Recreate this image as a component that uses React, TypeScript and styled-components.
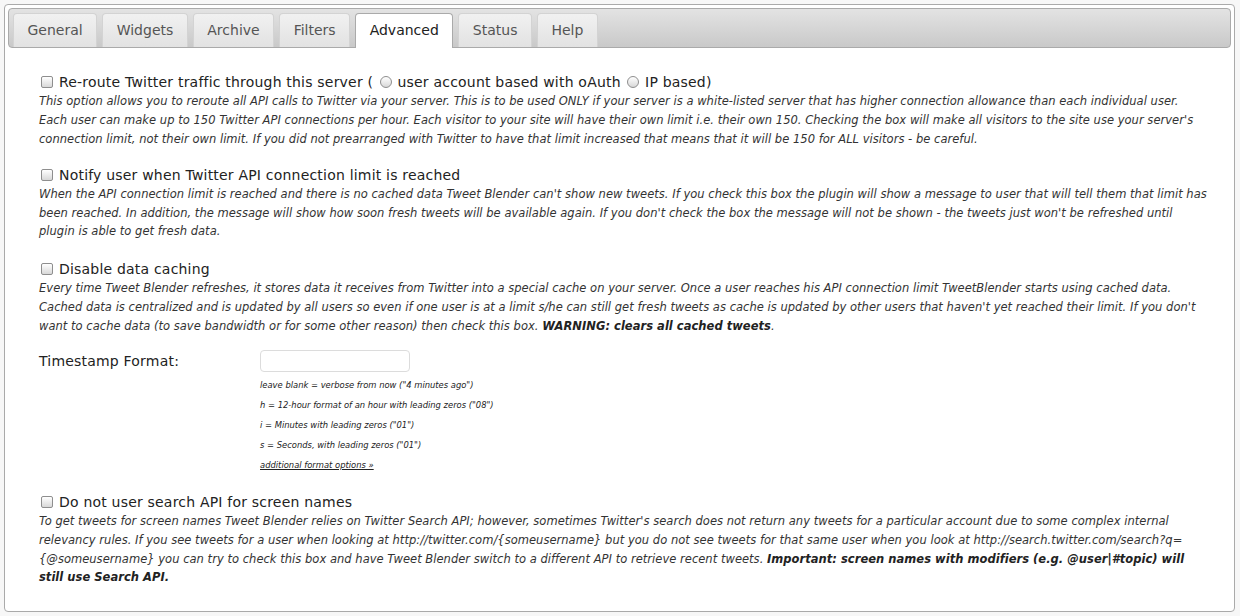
import React from "react";
import styled, { createGlobalStyle } from "styled-components";

const Global = createGlobalStyle`
  html, body { margin: 0; padding: 0; }
  body {
    background: #f7f7f7;
    font-family: "DejaVu Sans", Verdana, sans-serif;
    color: #222;
  }
`;

const Panel = styled.div`
  margin: 4px 5px 4px 4px;
  border: 1px solid #aaaaaa;
  border-radius: 4px;
  background: #fff;
  padding: 3px;
`;

const TabBar = styled.ul`
  display: flex;
  gap: 5px;
  list-style: none;
  margin: 0;
  padding: 4px 3px 0 4px;
  border: 1px solid #aaaaaa;
  border-radius: 4px;
  background: linear-gradient(#e3e3e3, #c9c9c9);
`;

const Tab = styled.li<{ $active?: boolean }>`
  font-size: 14px;
  line-height: 19px;
  padding: 7px 13.5px ${(p) => (p.$active ? "8px" : "7px")};
  margin-bottom: ${(p) => (p.$active ? "-1px" : "0")};
  border: 1px solid ${(p) => (p.$active ? "#aaaaaa" : "#d3d3d3")};
  border-bottom: 0;
  border-radius: 4px 4px 0 0;
  background: ${(p) => (p.$active ? "#ffffff" : "linear-gradient(#f1f1f1, #e2e2e2)")};
  color: ${(p) => (p.$active ? "#212121" : "#555555")};
  cursor: pointer;
`;

const Content = styled.div`
  padding: 25px 30px 21px 31px;
`;

const Section = styled.div<{ $gap?: number }>`
  margin-bottom: ${(p) => (p.$gap ?? 19)}px;
  &:last-child { margin-bottom: 0; }
`;

const Title = styled.label`
  display: block;
  font-size: 14px;
  line-height: 19px;
  height: 19px;
  letter-spacing: 0.2px;
  color: #222;
  white-space: nowrap;
`;

const Check = styled.input.attrs({ type: "checkbox" })`
  appearance: none;
  display: inline-block;
  vertical-align: -1px;
  width: 12px;
  height: 12px;
  margin: 0 6px 0 2px;
  border: 1px solid #8e8e8e;
  border-radius: 2px;
  background: linear-gradient(#ffffff, #d8d8d8);
  box-sizing: border-box;
`;

const Radio = styled.input.attrs({ type: "radio" })`
  appearance: none;
  display: inline-block;
  vertical-align: -1px;
  width: 12px;
  height: 12px;
  margin: 0 1px 0 2px;
  border: 1px solid #8e8e8e;
  border-radius: 50%;
  background: linear-gradient(#ffffff, #d8d8d8);
  box-sizing: border-box;
`;

const Desc = styled.div<{ $lh?: number }>`
  font-size: 11.5px;
  line-height: ${(p) => p.$lh ?? 18.7}px;
  letter-spacing: 0.03px;
  font-style: italic;
  color: #333;
  white-space: nowrap;
  b { font-weight: bold; color: #222; }
`;

const FieldRow = styled.div`
  display: grid;
  grid-template-columns: 221px 1fr;
`;

const FieldLabel = styled.div`
  font-size: 14px;
  line-height: 22px;
  letter-spacing: 0.2px;
  color: #222;
`;

const TextInput = styled.input`
  display: block;
  width: 150px;
  height: 22px;
  box-sizing: border-box;
  border: 1px solid #dcdcdc;
  border-radius: 4px;
  background: #fff;
  margin: 0;
  padding: 2px 4px;
`;

const Hints = styled.div`
  padding-top: 3px;
`;

const Hint = styled.div`
  font-size: 8.4px;
  line-height: 20px;
  font-style: italic;
  color: #222;
`;

const HintLink = styled.a`
  color: #222;
  text-decoration: underline;
`;

const tabs = ["General", "Widgets", "Archive", "Filters", "Advanced", "Status", "Help"];

export default function App() {
  return (
    <>
      <Global />
      <Panel>
        <TabBar>
          {tabs.map((t) => (
            <Tab key={t} $active={t === "Advanced"}>
              {t}
            </Tab>
          ))}
        </TabBar>
        <Content>
          <Section $gap={17}>
            <Title>
              <Check />
              Re-route Twitter traffic through this server ( <Radio name="reroute" /> user account based with oAuth{" "}
              <Radio name="reroute" /> IP based)
            </Title>
            <Desc $lh={19}>
              This option allows you to reroute all API calls to Twitter via your server. This is to be used ONLY if your server is a white-listed server that has higher connection allowance than each individual user.
              <br />
              Each user can make up to 150 Twitter API connections per hour. Each visitor to your site will have their own limit i.e. their own 150. Checking the box will make all visitors to the site use your server's
              <br />
              connection limit, not their own limit. If you did not prearranged with Twitter to have that limit increased that means that it will be 150 for ALL visitors - be careful.
            </Desc>
          </Section>
          <Section>
            <Title>
              <Check />
              Notify user when Twitter API connection limit is reached
            </Title>
            <Desc>
              When the API connection limit is reached and there is no cached data Tweet Blender can't show new tweets. If you check this box the plugin will show a message to user that will tell them that limit has
              <br />
              been reached. In addition, the message will show how soon fresh tweets will be available again. If you don't check the box the message will not be shown - the tweets just won't be refreshed until
              <br />
              plugin is able to get fresh data.
            </Desc>
          </Section>
          <Section $gap={15}>
            <Title>
              <Check />
              Disable data caching
            </Title>
            <Desc>
              Every time Tweet Blender refreshes, it stores data it receives from Twitter into a special cache on your server. Once a user reaches his API connection limit TweetBlender starts using cached data.
              <br />
              Cached data is centralized and is updated by all users so even if one user is at a limit s/he can still get fresh tweets as cache is updated by other users that haven't yet reached their limit. If you don't
              <br />
              want to cache data (to save bandwidth or for some other reason) then check this box. <b>WARNING: clears all cached tweets</b>.
            </Desc>
          </Section>
          <Section $gap={18}>
            <FieldRow>
              <FieldLabel>Timestamp Format:</FieldLabel>
              <div>
                <TextInput type="text" />
                <Hints>
                  <Hint>leave blank = verbose from now ("4 minutes ago")</Hint>
                  <Hint>h = 12-hour format of an hour with leading zeros ("08")</Hint>
                  <Hint>i = Minutes with leading zeros ("01")</Hint>
                  <Hint>s = Seconds, with leading zeros ("01")</Hint>
                  <Hint>
                    <HintLink href="#">additional format options »</HintLink>
                  </Hint>
                </Hints>
              </div>
            </FieldRow>
          </Section>
          <Section>
            <Title>
              <Check />
              Do not user search API for screen names
            </Title>
            <Desc>
              To get tweets for screen names Tweet Blender relies on Twitter Search API; however, sometimes Twitter's search does not return any tweets for a particular account due to some complex internal
              <br />
              relevancy rules. If you see tweets for a user when looking at http://twitter.com/{"{someusername}"} but you do not see tweets for that same user when you look at http://search.twitter.com/search?q=
              <br />
              {"{@someusername}"} you can try to check this box and have Tweet Blender switch to a different API to retrieve recent tweets. <b>Important: screen names with modifiers (e.g. @user|#topic) will</b>
              <br />
              <b>still use Search API.</b>
            </Desc>
          </Section>
        </Content>
      </Panel>
    </>
  );
}
